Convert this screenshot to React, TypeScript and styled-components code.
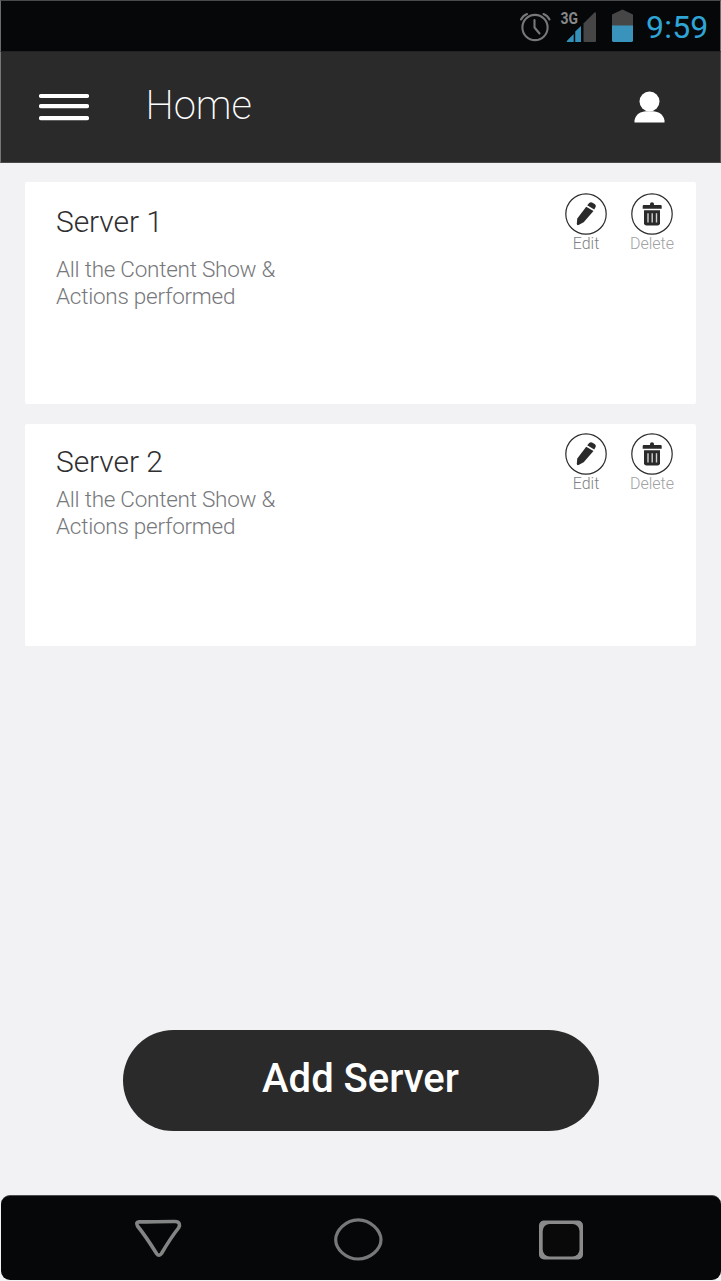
import React from "react";
import styled, { createGlobalStyle } from "styled-components";

const GlobalStyle = createGlobalStyle`
  * { box-sizing: border-box; }
  body { margin: 0; background: #f2f2f4; }
  h1, h2, p { margin: 0; }
  button { padding: 0; border: 0; background: none; font: inherit; color: inherit; }
  svg { display: block; flex: none; }
`;

const Screen = styled.div`
  display: flex;
  flex-direction: column;
  width: 721px;
  height: 1281px;
  overflow: hidden;
  background: #f2f2f4;
  font-family: Roboto, "Liberation Sans", sans-serif;
`;

const StatusBar = styled.div`
  display: flex;
  justify-content: flex-end;
  height: 51px;
  flex: none;
  padding-right: 12px;
  border-top: 1px solid #4a4a4b;
  border-left: 1px solid #6b6b6c;
  border-right: 1px solid #6b6b6c;
  background: #050709;
`;

const Clock = styled.span`
  width: 62px;
  font-size: 32px;
  line-height: 38px;
  padding-top: 7px;
  color: #2fa5d6;
  white-space: nowrap;
  letter-spacing: 0.2px;
`;

const Header = styled.header`
  display: flex;
  align-items: flex-start;
  height: 112px;
  flex: none;
  border-left: 1px solid #777;
  border-right: 1px solid #555;
  border-bottom: 1px solid #4b4a4b;
  border-top: 1px solid #222;
  background: #2a2a2a;
  color: #fff;
`;

const MenuButton = styled.button`
  margin: 41px 0 0 38px;
`;

const Title = styled.h1`
  flex: 1;
  margin: 30px 0 0 56.5px;
  font-size: 40px;
  line-height: 47px;
  font-weight: 200;
`;

const ProfileButton = styled.button`
  margin: 39px 55px 0 0;
`;

const Content = styled.main`
  display: flex;
  flex-direction: column;
  flex: 1;
  padding: 19px 25px 64px;
`;

const CardList = styled.div`
  display: flex;
  flex-direction: column;
  gap: 20px;
`;

const Card = styled.article`
  display: flex;
  justify-content: space-between;
  width: 671px;
  height: 222px;
  border-radius: 2px;
  background: #fff;
`;

const CardText = styled.div<{ $top: number }>`
  padding: ${(p) => p.$top}px 0 0 31px;
`;

const CardTitle = styled.h2<{ $gap: number }>`
  margin-bottom: ${(p) => p.$gap}px;
  font-size: 30px;
  line-height: 36px;
  font-weight: 300;
  letter-spacing: -0.1px;
  color: #2f2f30;
`;

const CardDescription = styled.p`
  width: 240px;
  font-size: 22.5px;
  line-height: 27px;
  font-weight: 300;
  letter-spacing: -0.25px;
  color: #77787b;
`;

const Actions = styled.div<{ $top: number }>`
  display: flex;
  padding: ${(p) => p.$top}px 11px 0 0;
`;

const ActionButton = styled.button<{ $color: string }>`
  display: flex;
  flex-direction: column;
  align-items: center;
  width: 66px;
  font-size: 16px;
  line-height: 17px;
  font-weight: 300;
  color: ${(p) => p.$color};
`;

const AddButton = styled.button`
  align-self: center;
  width: 476px;
  height: 101px;
  margin: auto 0 0;
  padding-bottom: 4px;
  border-radius: 51px;
  background: #2a2a2a;
  color: #fff;
  font-size: 40px;
  line-height: 47px;
  font-weight: 500;
`;

const NavBar = styled.nav`
  display: flex;
  height: 85px;
  flex: none;
  margin: 0 0 1px 1px;
  padding: 22px 0 0 133px;
  border-top: 1px solid #4b4d4e;
  border-radius: 9px;
  background: #050709;
`;

const NavButton = styled.button<{ $width: number }>`
  width: ${(p) => p.$width}px;
  height: 44px;
  display: flex;
  align-items: flex-start;
`;

const StatusIcons = () => (
  <svg width="128" height="50" viewBox="518 1 128 50">
    <g fill="none" stroke="#777" strokeWidth="2.1" strokeLinecap="round">
      <circle cx="535" cy="27.5" r="12.6" />
      <path d="M534.5 20v7.500l5 6M521 19.500q2-4 6-5.500M543.500 14q4 1.500 6 5.500" />
    </g>
    <text x="560.500" y="24" fill="#888" fontSize="17" fontWeight="700" textLength="17.500" lengthAdjust="spacingAndGlyphs">3G</text>
    <path d="M566.700 42q0-1 1-2l6-6V42zM575.200 42V31.500l5.800-5.500v16z" fill="#3390b9" />
    <path d="M583.500 23.500l11-11q1.500-.7 1.500 1V41a1 1 0 0 1-1 1h-10.500a1 1 0 0 1-1-1z" fill="#464647" />
    <path d="M612 26V14.500l10.500-5 10.500 5V26z" fill="#464647" />
    <path d="M612 25.500h21V41l-1 1h-19l-1-1z" fill="#3993bb" />
  </svg>
);

const MenuIcon = () => (
  <svg width="50" height="29" viewBox="0 0 50 29" stroke="#fff" strokeWidth="4.200" strokeLinecap="round">
    <path d="M2 3h46M2 13.200h46M2 25.200h46" />
  </svg>
);

const ProfileIcon = () => (
  <svg width="31" height="33" viewBox="0 0 31 33" fill="#fff">
    <circle cx="15.500" cy="10.500" r="10" />
    <path d="M.5 31.500v-2C1.500 23 7 20.500 12 20.200h7c5 .3 10.500 2.800 11.500 9.300v2z" />
  </svg>
);

const PencilIcon = () => (
  <svg width="42" height="42" viewBox="0 0 42 42">
    <circle cx="21" cy="21" r="20.200" fill="#fff" stroke="#2a2a2a" strokeWidth="1.200" />
    <path d="M21.200 13.700l7.300 4.300L18.700 29.300l-5.200 2.800q-1.700.4-1.700-1.300l.5-5.300z" fill="#2a2a2a" />
    <path d="M22.200 12.300l2-2.300q1.500-1.200 3.300-.3l2.500 1.500q1.500 1.300.6 2.900l-1.400 2.300z" fill="#2a2a2a" />
  </svg>
);

const TrashIcon = () => (
  <svg width="42" height="42" viewBox="0 0 42 42">
    <circle cx="21" cy="21" r="20.200" fill="#fff" stroke="#2a2a2a" strokeWidth="1.200" />
    <path d="M11.700 15.700v-2.700q0-1 1-1H19V11q0-1.700 2-1.700t2 1.700v1h6.700q1 0 1 1v2.700z" fill="#2a2a2a" />
    <path d="M13 17.200h16v13q-.2 2.300-2.500 2.300H15.500q-2.300 0-2.500-2.300z" fill="#2a2a2a" />
    <path d="M17 20.200v9.300M21.200 20.200v9.300M25.500 20.200v9.300" stroke="#d0d0d0" strokeWidth="1.400" />
  </svg>
);

const NavBackIcon = () => (
  <svg width="50" height="42" viewBox="134 1218 50 42">
    <path d="M139 1221.700c10 .5 20-.3 36-.2 4.500 0 5.500 3 3.500 6.500-4 5-12 17-17 25.500q-2.500 3.500-4.800.2C150 1243 144 1234 137.500 1226q-2-4 1.500-4.300z" fill="none" stroke="#838484" strokeWidth="3.600" />
  </svg>
);

const NavHomeIcon = () => (
  <svg width="50" height="44" viewBox="333 1218 50 44">
    <path d="M358.200 1219.800C370.700 1219.800 381 1230.800 381 1239.800s-10.300 19.200-22.800 19.200-22.500-10-22.500-19.200 10-20 22.500-20z" fill="none" stroke="#777879" strokeWidth="3.200" />
  </svg>
);

const NavRecentIcon = () => (
  <svg width="46" height="42" viewBox="538 1218 46 42">
    <rect x="539" y="1220.500" width="44" height="39" rx="5" fill="#8a8a8a" />
    <rect x="542.700" y="1224" width="36.800" height="32.500" rx="7" fill="#090909" />
  </svg>
);

const servers = [
  { name: "Server 1", textTop: 22, titleGap: 16, actionsTop: 11 },
  { name: "Server 2", textTop: 20, titleGap: 6, actionsTop: 9 },
];

export default function App() {
  return (
    <Screen>
      <GlobalStyle />
      <StatusBar>
        <StatusIcons />
        <Clock>9:59</Clock>
      </StatusBar>
      <Header>
        <MenuButton aria-label="Menu"><MenuIcon /></MenuButton>
        <Title>Home</Title>
        <ProfileButton aria-label="Profile"><ProfileIcon /></ProfileButton>
      </Header>
      <Content>
        <CardList>
          {servers.map((s) => (
            <Card key={s.name}>
              <CardText $top={s.textTop}>
                <CardTitle $gap={s.titleGap}>{s.name}</CardTitle>
                <CardDescription>All the Content Show &amp; Actions performed</CardDescription>
              </CardText>
              <Actions $top={s.actionsTop}>
                <ActionButton $color="#808184"><PencilIcon />Edit</ActionButton>
                <ActionButton $color="#a0a1a3"><TrashIcon />Delete</ActionButton>
              </Actions>
            </Card>
          ))}
        </CardList>
        <AddButton>Add Server</AddButton>
      </Content>
      <NavBar>
        <NavButton $width={199} aria-label="Back"><NavBackIcon /></NavButton>
        <NavButton $width={205} aria-label="Home screen"><NavHomeIcon /></NavButton>
        <NavButton $width={46} aria-label="Recent apps"><NavRecentIcon /></NavButton>
      </NavBar>
    </Screen>
  );
}
